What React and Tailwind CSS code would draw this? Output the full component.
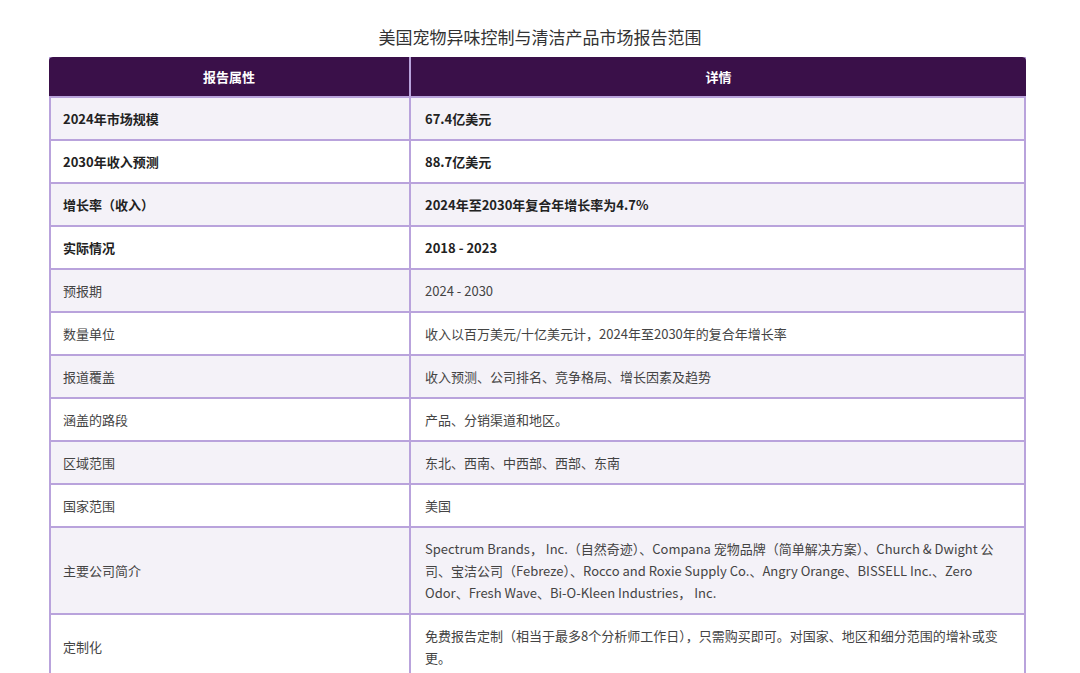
export default function App() {
  const rows = [
    ["2024年市场规模", "67.4亿美元", true],
    ["2030年收入预测", "88.7亿美元", true],
    ["增长率（收入）", "2024年至2030年复合年增长率为4.7%", true],
    ["实际情况", "2018 - 2023", true],
    ["预报期", "2024 - 2030"],
    ["数量单位", "收入以百万美元/十亿美元计，2024年至2030年的复合年增长率"],
    ["报道覆盖", "收入预测、公司排名、竞争格局、增长因素及趋势"],
    ["涵盖的路段", "产品、分销渠道和地区。"],
    ["区域范围", "东北、西南、中西部、西部、东南"],
    ["国家范围", "美国"],
    ["主要公司简介", "Spectrum Brands， Inc.（自然奇迹）、Compana 宠物品牌（简单解决方案）、Church & Dwight 公司、宝洁公司（Febreze）、Rocco and Roxie Supply Co.、Angry Orange、BISSELL Inc.、Zero Odor、Fresh Wave、Bi-O-Kleen Industries， Inc."],
    ["定制化", "免费报告定制（相当于最多8个分析师工作日），只需购买即可。对国家、地区和细分范围的增补或变更。"],
  ];
  return (
    <div className="w-[1080px] h-[673px] overflow-hidden bg-white" style={{ fontFamily: '"Noto Sans CJK SC", "Noto Sans", sans-serif' }}>
      <div className="text-center text-[17px] text-[#333] pt-[24px] h-[57px] leading-[26px]">美国宠物异味控制与清洁产品市场报告范围</div>
      <div className="ml-[49px] w-[977px] border-x-2 border-[#b9a3dc]">
        <div className="flex bg-[#3a1049] text-white text-[13px] font-bold rounded-t-[4px] h-[41px] items-center border-b-2 border-[#b9a3dc] -mx-[2px]">
          <div className="w-[362px] text-center border-r-2 border-[#b9a3dc] h-full flex items-center justify-center">报告属性</div>
          <div className="flex-1 text-center">详情</div>
        </div>
        {rows.map(([a, b, bold], i) => (
          <div key={i} className={`flex border-b-2 border-[#b9a3dc] text-[13px] leading-[22px] ${bold ? "font-bold text-[#222]" : "text-[#444]"} ${i % 2 === 0 ? "bg-[#f4f2f8]" : "bg-white"}`}>
            <div className="w-[360px] shrink-0 border-r-2 border-[#b9a3dc] px-[12px] py-[9.5px] flex items-center">{a}</div>
            <div className="flex-1 pl-[14px] pr-[24px] py-[9.5px]">{b}</div>
          </div>
        ))}
      </div>
    </div>
  );
}
